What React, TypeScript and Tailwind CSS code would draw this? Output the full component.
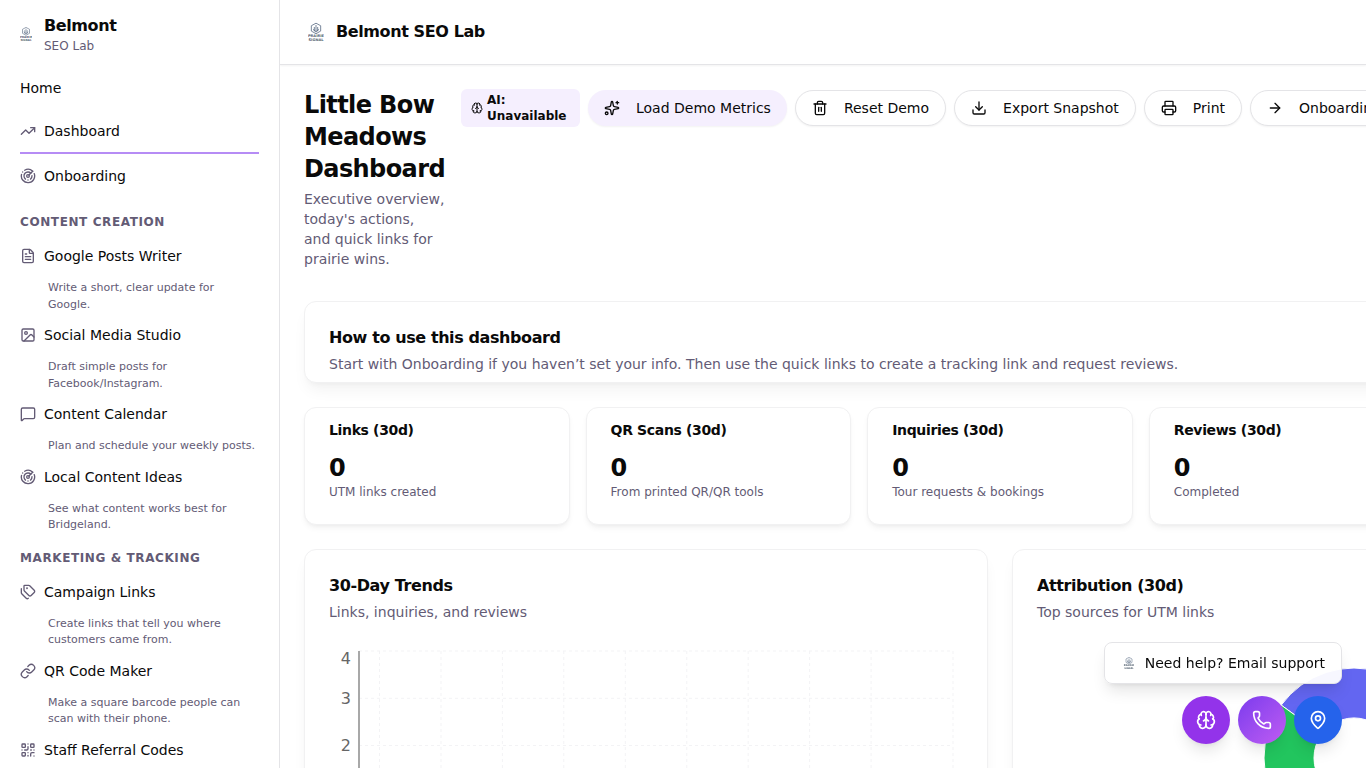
import type { ReactNode } from 'react';
import {
  ArrowRight,
  Brain,
  Download,
  FileText,
  Image,
  Link as LinkIcon,
  MapPin,
  MessageSquare,
  Phone,
  Printer,
  QrCode,
  Radar,
  Sparkles,
  Tags,
  Trash2,
  TrendingUp,
  type LucideIcon,
} from 'lucide-react';

type NavItem = { label: string; icon: LucideIcon; note: string };

const contentItems: NavItem[] = [
  { label: 'Google Posts Writer', icon: FileText, note: 'Write a short, clear update for Google.' },
  { label: 'Social Media Studio', icon: Image, note: 'Draft simple posts for Facebook/Instagram.' },
  { label: 'Content Calendar', icon: MessageSquare, note: 'Plan and schedule your weekly posts.' },
  { label: 'Local Content Ideas', icon: Radar, note: 'See what content works best for Bridgeland.' },
];

const trackingItems: NavItem[] = [
  { label: 'Campaign Links', icon: Tags, note: 'Create links that tell you where customers came from.' },
  { label: 'QR Code Maker', icon: LinkIcon, note: 'Make a square barcode people can scan with their phone.' },
  { label: 'Staff Referral Codes', icon: QrCode, note: 'Give each team member a code to share.' },
];

const stats = [
  { title: 'Links (30d)', value: 0, note: 'UTM links created' },
  { title: 'QR Scans (30d)', value: 0, note: 'From printed QR/QR tools' },
  { title: 'Inquiries (30d)', value: 0, note: 'Tour requests & bookings' },
  { title: 'Reviews (30d)', value: 0, note: 'Completed' },
];

function Logo({ className }: { className: string }) {
  return (
    <svg viewBox="0 0 24 28" className={className} fill="none" stroke="#64748b" aria-hidden="true">
      <path d="M12 .8l7 3.800v8l-7 4-7-4v-8z" strokeWidth="1.3" />
      <path d="M12 3.500v11M9.500 6.500v6.500M14.500 6.500v6.500M7.500 10l4.500 3.500 4.500-3.500" strokeWidth="1.300" />
      <g fill="#52606f" stroke="none" fontSize="5.400" fontWeight="bold" textAnchor="middle">
        <text x="12" y="22">PRAIRIE</text>
        <text x="12" y="27.500">SIGNAL</text>
      </g>
    </svg>
  );
}

function NavSection({ title, items }: { title: string; items: NavItem[] }) {
  return (
    <section>
      <h2 className="px-5 pt-4 pb-1 text-xs leading-4 font-semibold tracking-wider text-[#635b75] uppercase">{title}</h2>
      <ul>
        {items.map(({ label, icon: Icon, note }) => (
          <li key={label}>
            <a href="#" className="flex h-11 items-center gap-2 px-5 text-sm">
              <Icon className="size-4 shrink-0 text-[#635b75]" />
              {label}
            </a>
            <p className="pt-0.5 pr-5 pl-12 text-[11px] leading-normal text-[#635b75]">{note}</p>
          </li>
        ))}
      </ul>
    </section>
  );
}

function ActionButton({ icon: Icon, children }: { icon: LucideIcon; children: ReactNode }) {
  return (
    <button
      type="button"
      className="flex h-9 shrink-0 items-center gap-4 rounded-full border border-[#e4e4e7] bg-white px-4 text-sm shadow-xs"
    >
      <Icon className="size-4" />
      {children}
    </button>
  );
}

function ChartCard({ title, note, children }: { title: string; note: string; children: ReactNode }) {
  return (
    <section className="rounded-xl border border-[#f1f1f2] bg-white p-6 shadow-lg shadow-black/5">
      <h2 className="leading-6 font-semibold tracking-tight">{title}</h2>
      <p className="mt-1 text-sm leading-5 text-[#635b75]">{note}</p>
      <div className="mt-6">{children}</div>
    </section>
  );
}

function TrendsChart() {
  const columns = [50.5, 112, 173.4, 234.8, 296.3, 357.8, 419.2, 480.6, 542.1, 624];
  const rows = [5, 52.3, 99.5, 146.8, 194];
  return (
    <svg viewBox="0 0 634 256" className="block w-full" role="img" aria-label="30-day trends">
      <g stroke="#f3f3f5" strokeDasharray="3 3">
        {rows.map((y) => (
          <path key={y} d={`M30 ${y}H624`} />
        ))}
        {columns.map((x) => (
          <path key={x} d={`M${x} 5V194`} />
        ))}
      </g>
      <path d="M30 5V194H624" fill="none" stroke="#a8a8a8" strokeWidth="2" />
      <g fill="#666" fontSize="16" textAnchor="end">
        <text x="22" y="18">4</text>
        <text x="22" y="58">3</text>
        <text x="22" y="105">2</text>
        <text x="22" y="153">1</text>
        <text x="22" y="200">0</text>
      </g>
    </svg>
  );
}

function AttributionChart() {
  return (
    <svg viewBox="0 0 634 256" className="block w-full" role="img" aria-label="Attribution by source">
      <g stroke="#fff">
        <path fill="#6366f1" d="M407 112A90 90 0 0 0 244.200 59.100L284.600 88.500A40 40 0 0 1 357 112Z" />
        <path fill="#22c55e" d="M244.200 59.100A90 90 0 0 0 344.800 197.600L329.400 150A40 40 0 0 1 284.600 88.500Z" />
        <path fill="#f59e0b" d="M344.800 197.600A90 90 0 0 0 407 112H357A40 40 0 0 1 329.400 150Z" />
      </g>
    </svg>
  );
}

export default function App() {
  return (
    <div className="flex h-screen overflow-hidden bg-white font-['DejaVu_Sans',sans-serif] text-[#0a0a0a]">
      <aside className="w-70 shrink-0 overflow-hidden border-r border-[#e4e4e7]">
        <div className="flex h-17 items-center gap-3 px-5">
          <Logo className="h-4 w-3 shrink-0" />
          <div>
            <p className="leading-6 font-semibold tracking-tight">Belmont</p>
            <p className="text-xs leading-4 text-[#635b75]">SEO Lab</p>
          </div>
        </div>
        <nav aria-label="Main">
          <a href="#" className="flex h-10 items-center px-5 text-sm">Home</a>
          <a href="#" aria-current="page" className="mx-5 mt-0.5 flex h-11 items-center gap-2 border-b-2 border-[#b68cf5] text-sm">
            <TrendingUp className="size-4 text-[#635b75]" />
            Dashboard
          </a>
          <a href="#" className="flex h-11 items-center gap-2 px-5 text-sm">
            <Radar className="size-4 text-[#635b75]" />
            Onboarding
          </a>
          <NavSection title="Content Creation" items={contentItems} />
          <NavSection title="Marketing & Tracking" items={trackingItems} />
        </nav>
      </aside>

      <div className="min-w-0 flex-1 overflow-hidden">
        <header className="flex h-[65px] items-center gap-3 border-b border-[#e4e4e7] px-7 shadow-xs">
          <Logo className="h-5 w-4" />
          <span className="font-semibold tracking-tight">Belmont SEO Lab</span>
        </header>
        <main className="min-w-[1440px] p-6">
          <div className="flex items-start gap-4">
            <div className="w-[141px] shrink-0">
              <h1 className="text-2xl leading-8 font-bold tracking-tight">Little Bow Meadows Dashboard</h1>
              <p className="mt-1 text-sm leading-5 text-[#635b75]">
                Executive overview, today&apos;s actions, and quick links for prairie wins.
              </p>
            </div>
            <div className="flex items-center gap-2">
              <div className="flex items-center gap-1 rounded-md bg-[#f5effe] px-2.5 py-[3px] text-xs leading-4 font-semibold">
                <Brain className="size-3 shrink-0" />
                <span className="w-[83px]">AI: Unavailable</span>
              </div>
              <button type="button" className="flex h-9 shrink-0 items-center gap-4 rounded-full bg-[#f5effe] px-4 text-sm shadow-xs">
                <Sparkles className="size-4" />
                Load Demo Metrics
              </button>
              <ActionButton icon={Trash2}>Reset Demo</ActionButton>
              <ActionButton icon={Download}>Export Snapshot</ActionButton>
              <ActionButton icon={Printer}>Print</ActionButton>
              <ActionButton icon={ArrowRight}>Onboarding</ActionButton>
            </div>
          </div>

          <section className="mt-8 rounded-xl border border-[#f1f1f2] bg-white px-6 pt-6 pb-2 shadow-lg shadow-black/5">
            <h2 className="leading-6 font-semibold tracking-tight">How to use this dashboard</h2>
            <p className="mt-1 text-sm leading-5 text-[#635b75]">
              Start with Onboarding if you haven’t set your info. Then use the quick links to create a tracking link and request reviews.
            </p>
          </section>

          <div className="mt-6 grid grid-cols-5 gap-4">
            {stats.map((stat) => (
              <section key={stat.title} className="rounded-xl border border-[#f1f1f2] bg-white px-6 pt-3 pb-6 shadow-md shadow-black/5">
                <h2 className="text-sm leading-5 font-semibold tracking-tight">{stat.title}</h2>
                <p className="mt-3 text-2xl leading-8 font-bold">{stat.value}</p>
                <p className="text-xs leading-4 text-[#635b75]">{stat.note}</p>
              </section>
            ))}
          </div>

          <div className="mt-6 grid grid-cols-2 gap-6">
            <ChartCard title="30-Day Trends" note="Links, inquiries, and reviews">
              <TrendsChart />
            </ChartCard>
            <ChartCard title="Attribution (30d)" note="Top sources for UTM links">
              <AttributionChart />
            </ChartCard>
          </div>
        </main>
      </div>

      <div className="fixed right-6 bottom-6 flex flex-col items-end gap-3">
        <a href="#" className="flex h-[42px] items-center gap-2 rounded-lg border border-[#e4e4e7] bg-white/95 px-4 text-sm shadow-lg">
          <Logo className="h-3 w-4" />
          Need help? Email support
        </a>
        <div className="flex gap-2">
          <button type="button" aria-label="AI assistant" className="flex size-12 items-center justify-center rounded-full bg-[#9333ea] text-white shadow-lg">
            <Brain className="size-5" />
          </button>
          <button type="button" aria-label="Call" className="flex size-12 items-center justify-center rounded-full bg-linear-to-br from-[#7c3aed] to-[#c05bf2] text-white shadow-lg">
            <Phone className="size-5" />
          </button>
          <button type="button" aria-label="Directions" className="flex size-12 items-center justify-center rounded-full bg-[#2563eb] text-white shadow-lg">
            <MapPin className="size-5" />
          </button>
        </div>
      </div>
    </div>
  );
}
